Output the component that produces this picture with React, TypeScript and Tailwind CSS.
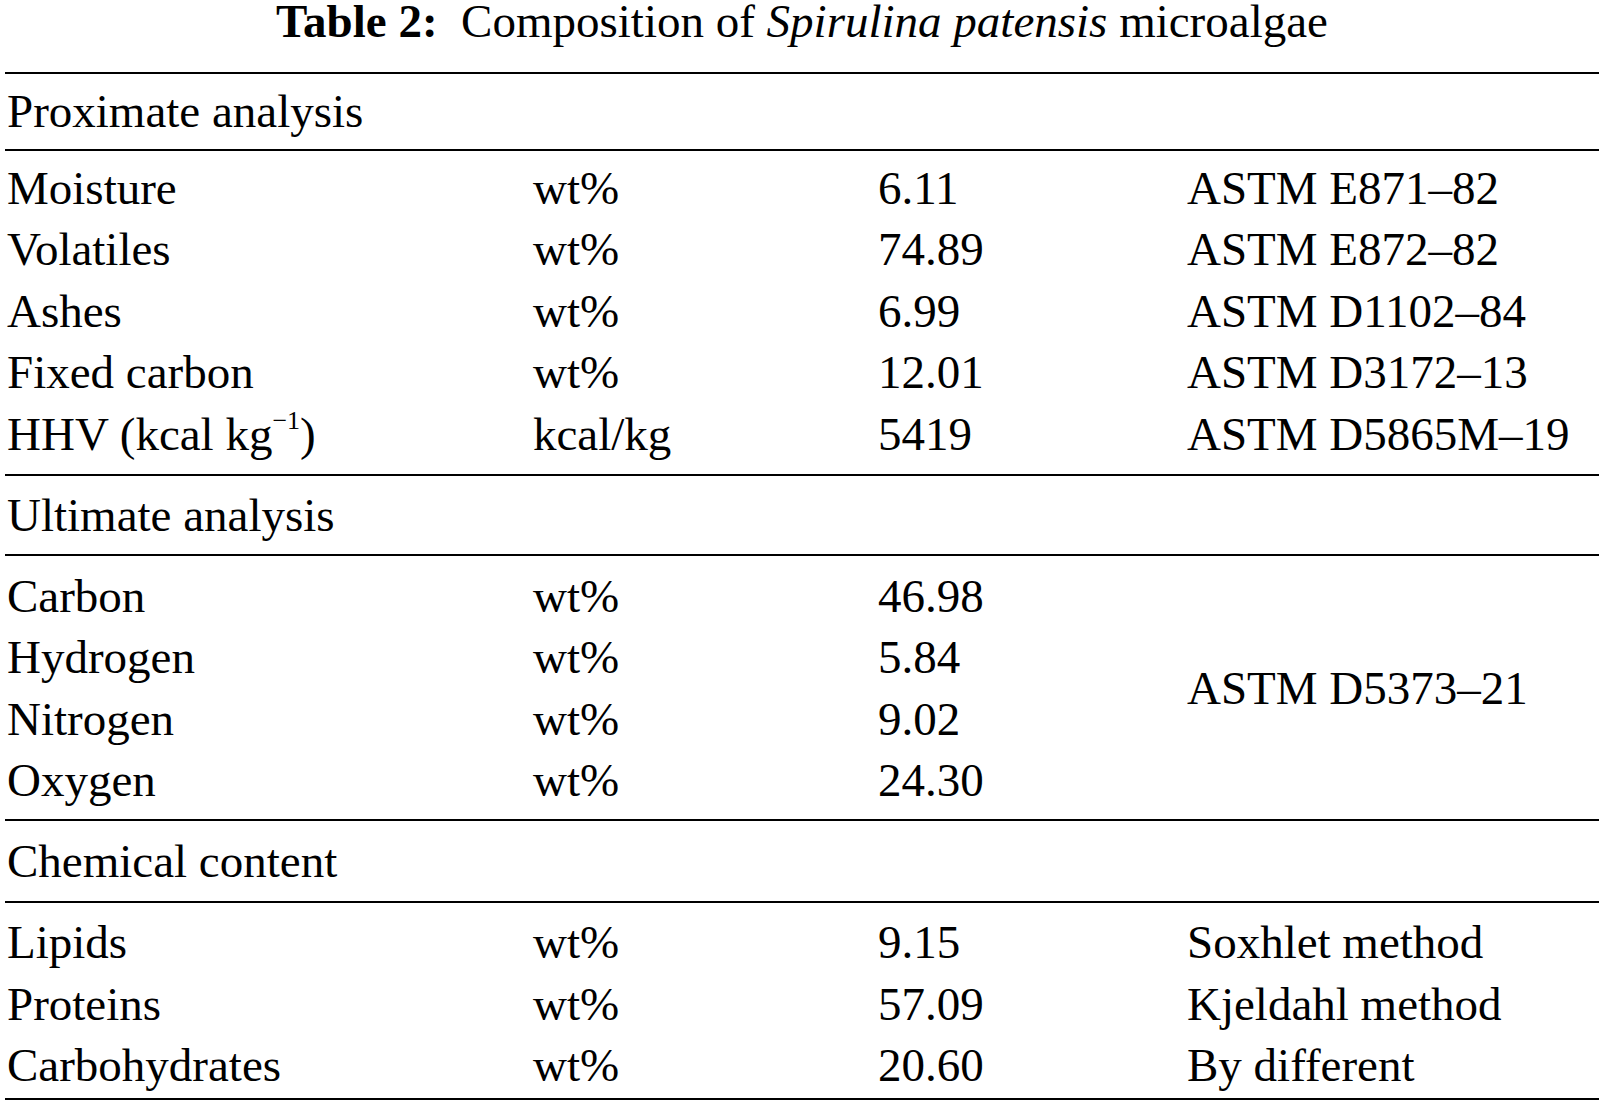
import React from "react";

type Row = { name: React.ReactNode; unit: string; value: string; method?: string };

type Section = {
  title: string;
  rows: Row[];
  // one method shared by every row of the section
  sharedMethod?: string;
  headCls: string;
  bodyCls: string;
};

const sections: Section[] = [
  {
    title: "Proximate analysis",
    headCls: "pt-[7px] pb-[6px]",
    bodyCls: "pt-[7px] pb-[9px]",
    rows: [
      { name: "Moisture", unit: "wt%", value: "6.11", method: "ASTM E871–82" },
      { name: "Volatiles", unit: "wt%", value: "74.89", method: "ASTM E872–82" },
      { name: "Ashes", unit: "wt%", value: "6.99", method: "ASTM D1102–84" },
      { name: "Fixed carbon", unit: "wt%", value: "12.01", method: "ASTM D3172–13" },
      {
        name: (
          <>
            HHV (kcal kg
            <sup className="relative -top-[4px] text-[26px] align-super leading-none">−1</sup>)
          </>
        ),
        unit: "kcal/kg",
        value: "5419",
        method: "ASTM D5865M–19",
      },
    ],
  },
  {
    title: "Ultimate analysis",
    headCls: "pt-[9px] pb-[7px]",
    bodyCls: "pt-[10px] pb-[7px]",
    sharedMethod: "ASTM D5373–21",
    rows: [
      { name: "Carbon", unit: "wt%", value: "46.98" },
      { name: "Hydrogen", unit: "wt%", value: "5.84" },
      { name: "Nitrogen", unit: "wt%", value: "9.02" },
      { name: "Oxygen", unit: "wt%", value: "24.30" },
    ],
  },
  {
    title: "Chemical content",
    headCls: "pt-[10px] pb-[9px]",
    bodyCls: "pt-[9px] pb-[1px]",
    rows: [
      { name: "Lipids", unit: "wt%", value: "9.15", method: "Soxhlet method" },
      { name: "Proteins", unit: "wt%", value: "57.09", method: "Kjeldahl method" },
      { name: "Carbohydrates", unit: "wt%", value: "20.60", method: "By different" },
    ],
  },
];

function Rule() {
  return <div className="h-[2px] bg-black" />;
}

function SectionBlock({ section }: { section: Section }) {
  return (
    <>
      <div className={`pl-[2px] leading-[61.5px] ${section.headCls}`}>{section.title}</div>
      <Rule />
      <div className={`grid grid-cols-[526px_345px_309px_1fr] pl-[2px] leading-[61.5px] ${section.bodyCls}`}>
        {section.rows.map((r, i) => (
          <React.Fragment key={i}>
            <div className="whitespace-nowrap" style={{ gridRow: i + 1 }}>
              {r.name}
            </div>
            <div style={{ gridRow: i + 1 }}>{r.unit}</div>
            <div style={{ gridRow: i + 1 }}>{r.value}</div>
            {section.sharedMethod ? null : (
              <div className="whitespace-nowrap" style={{ gridRow: i + 1 }}>
                {r.method}
              </div>
            )}
          </React.Fragment>
        ))}
        {section.sharedMethod ? (
          <div
            className="col-start-4 self-center whitespace-nowrap"
            style={{ gridRow: `1 / span ${section.rows.length}` }}
          >
            {section.sharedMethod}
          </div>
        ) : null}
      </div>
      <Rule />
    </>
  );
}

export default function App() {
  return (
    <div className="min-h-screen bg-white text-black font-['Liberation_Serif',serif] text-[47px]">
      <div className="h-[72px] text-center leading-[43px]">
        <span className="font-bold">Table 2:</span>
        <span className="whitespace-pre">  Composition of </span>
        <i>Spirulina patensis</i> microalgae
      </div>
      <div className="ml-[5px] mr-[5px]">
        <Rule />
        {sections.map((s) => (
          <SectionBlock key={s.title} section={s} />
        ))}
      </div>
    </div>
  );
}
